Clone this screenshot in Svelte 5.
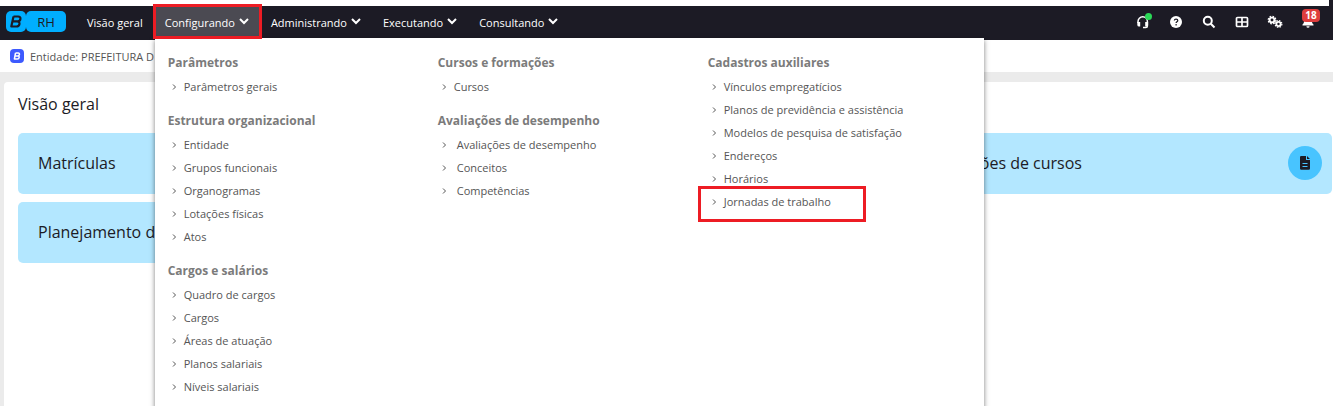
<script lang="ts">
	const columns = [
		[
			{ title: 'Parâmetros', links: ['Parâmetros gerais'] },
			{
				title: 'Estrutura organizacional',
				links: ['Entidade', 'Grupos funcionais', 'Organogramas', 'Lotações físicas', 'Atos']
			},
			{
				title: 'Cargos e salários',
				links: ['Quadro de cargos', 'Cargos', 'Áreas de atuação', 'Planos salariais', 'Níveis salariais']
			}
		],
		[
			{ title: 'Cursos e formações', links: ['Cursos'] },
			{
				title: 'Avaliações de desempenho',
				wide: true,
				links: ['Avaliações de desempenho', 'Conceitos', 'Competências']
			}
		],
		[
			{
				title: 'Cadastros auxiliares',
				links: [
					'Vínculos empregatícios',
					'Planos de previdência e assistência',
					'Modelos de pesquisa de satisfação',
					'Endereços',
					'Horários',
					'Jornadas de trabalho'
				]
			}
		]
	];

	const menus = ['Configurando', 'Administrando', 'Executando', 'Consultando'];
	const highlighted = 'Jornadas de trabalho';

	let open = $state('Configurando');

	function toggle(name: string) {
		open = open === name ? '' : name;
	}
</script>

<div class="page">
	<header class="topbar">
		<a class="brand" href="#inicio" aria-label="RH">
			<span class="brand-mark">
				<svg width="14" height="13" viewBox="0 0 14 13" fill="none" stroke="#1c1b25" stroke-width="2.200" stroke-linejoin="round">
					<path d="M4.500 1.500h4.700c3.300 0 2.800 4.700-.4 4.900H3.500M8.400 6.400c3.400.2 2.500 5.100-1 5.100H2.300L4.500 1.500" />
				</svg>
			</span>
			<span class="brand-name">RH</span>
		</a>

		<nav class="nav">
			<a class="nav-link" href="#visao-geral">Visão geral</a>
			{#each menus as name}
				<div class="nav-item" class:open={open === name}>
					<button class="nav-link" aria-expanded={open === name} onclick={() => toggle(name)}>
						{name}
						<svg width="10" height="8" viewBox="0 0 10 8" fill="none">
							<path d="M1 1l4 4 4-4" stroke="currentColor" stroke-width="2" />
						</svg>
					</button>
					{#if name === 'Configurando' && open === name}
						<div class="menu">
							{#each columns as groups}
								<div class="menu-column">
									{#each groups as group}
										<section>
											<h3>{group.title}</h3>
											<ul class:wide={group.wide}>
												{#each group.links as link}
													<li>
														<a href="#menu" class:highlighted={link === highlighted}>
															<svg width="5" height="7" viewBox="0 0 5 7" fill="none">
																<path d="M1 1.500L3.500 4 1 6.500" stroke="currentColor" />
															</svg>
															{link}
														</a>
													</li>
												{/each}
											</ul>
										</section>
									{/each}
								</div>
							{/each}
						</div>
					{/if}
				</div>
			{/each}
		</nav>

		<div class="tools">
			<button aria-label="Suporte">
				<svg width="14" height="14" viewBox="0 0 14 14" fill="none">
					<path d="M2 8V6.500a4.700 4.700 0 0 1 9.400 0V11c0 1-.6 1.500-1.600 1.500H7" stroke="#fff" stroke-width="1.500" />
					<path d="M1.300 7h2.900v4.500H3A1.700 1.700 0 0 1 1.300 10zM9.200 7h2.900v3a1.700 1.700 0 0 1-1.700 1.500H9.200z" fill="#fff" />
				</svg>
				<span class="status"></span>
			</button>
			<button aria-label="Ajuda">
				<svg width="14" height="14" viewBox="0 0 14 14" fill="none">
					<circle cx="7" cy="7" r="6" fill="#fff" />
					<path d="M5.300 5.500c.2-2 3.500-1.800 3.500.1 0 1.200-1.700 1.200-1.700 2.400M7.100 9v1.400" stroke="#1c1b25" stroke-width="1.200" />
				</svg>
			</button>
			<button aria-label="Pesquisar">
				<svg width="14" height="14" viewBox="0 0 14 14" fill="none" stroke="#fff" stroke-width="2">
					<circle cx="5.800" cy="5.800" r="4" />
					<path d="M8.800 8.800l3.700 3.700" />
				</svg>
			</button>
			<button aria-label="Aplicativos">
				<svg width="14" height="14" viewBox="0 0 14 14" fill="none" stroke="#fff" stroke-width="1.700">
					<rect x="1.500" y="2.500" width="11" height="9" rx="1" />
					<path d="M7 3v8M2 7h10" />
				</svg>
			</button>
			<button aria-label="Configurações">
				<svg width="16" height="14" viewBox="0 0 16 14" fill="none" stroke="#fff">
					<circle cx="5" cy="5" r="2.400" stroke-width="1.900" />
					<circle cx="5" cy="5" r="3.800" stroke-width="1.200" stroke-dasharray="1.700 1.280" />
					<circle cx="11.500" cy="9" r="2.100" stroke-width="1.800" />
					<circle cx="11.500" cy="9" r="3.400" stroke-width="1.200" stroke-dasharray="1.500 1.170" />
				</svg>
			</button>
			<button aria-label="Notificações">
				<svg width="14" height="14" viewBox="0 0 14 14" fill="#fff">
					<path d="M7 1c3 0 3.800 2 3.800 4 0 2.500.5 3.500 1.700 4.500v1h-11v-1C2.700 8.500 3.200 7.500 3.200 5c0-2 .8-4 3.800-4zM5.400 11.200h3.200a1.600 1.600 0 0 1-3.200 0z" />
				</svg>
				<span class="count">18</span>
			</button>
		</div>
	</header>

	<div class="entity">
		<svg width="14" height="14" viewBox="0 0 14 14" fill="none">
			<rect width="14" height="14" rx="4" fill="#3d5afe" />
			<path d="M5.500 4h2.700c1.900 0 1.600 2.900-.3 2.900H5M7.900 6.900c2 0 1.600 3.100-.5 3.100H4.400l1.100-6" stroke="#fff" stroke-width="1.500" stroke-linejoin="round" />
		</svg>
		<span>Entidade: PREFEITURA D</span>
	</div>

	<main>
		<h1>Visão geral</h1>
		<div class="cards">
			<a class="card" href="#matriculas">Matrículas</a>
			<a class="card last" href="#cursos">
				Solicitações de cursos
				<span class="card-icon">
					<svg width="10" height="14" viewBox="0 0 10 14">
						<path d="M1.500 0H6v4h4v8.500a1.300 1.300 0 0 1-1.300 1.300H1.300A1.300 1.300 0 0 1 0 12.500v-11A1.400 1.400 0 0 1 1.500 0zM7 0l3 3H7z" fill="#1c1b25" />
						<path d="M2.500 7.500h5M2.500 10.500h5" stroke="#48c4ff" stroke-width="1.200" />
					</svg>
				</span>
			</a>
			<a class="card" href="#planejamento">Planejamento de</a>
		</div>
	</main>
</div>

<style>
	:global(body) {
		margin: 0;
		background: #fff;
	}

	.page {
		display: flex;
		flex-direction: column;
		height: 100vh;
		overflow: hidden;
		background: #ebebeb;
		font-family: 'Open Sans', 'Noto Sans', sans-serif;
		color: #1c1b25;
	}

	.page::before {
		content: '';
		flex-shrink: 0;
		height: 6px;
		border-right: 4px solid #1c1b25;
		background: #fff;
	}

	a {
		color: inherit;
		text-decoration: none;
	}

	button {
		padding: 0;
		border: 0;
		background: none;
		font: inherit;
		color: inherit;
		cursor: pointer;
	}

	.topbar {
		display: flex;
		flex-shrink: 0;
		align-items: flex-start;
		height: 34px;
		padding: 0 17px 0 6px;
		background: #1c1b25;
		color: #fff;
	}

	.brand {
		display: flex;
		margin-top: 5px;
		color: #1c1b25;
	}

	.brand-mark,
	.brand-name {
		display: flex;
		align-items: center;
		justify-content: center;
		height: 21px;
		border-radius: 5px;
		background: #00aeff;
	}

	.brand-mark {
		width: 20px;
	}

	.brand-name {
		width: 40px;
		font-size: 13px;
		font-weight: 500;
	}

	.nav {
		display: flex;
		margin-left: 10px;
		font-size: 11px;
		font-weight: 500;
	}

	.nav-link {
		display: flex;
		align-items: center;
		gap: 4px;
		height: 32px;
		padding: 0 11px;
		white-space: nowrap;
	}

	.nav-item {
		position: relative;
	}

	.nav-item.open .nav-link {
		background: #4b4a52;
	}

	/* red frame drawn over the open item */
	.nav-item.open::after {
		content: '';
		position: absolute;
		z-index: 3;
		inset: -2px -2px -1px -1px;
		border: 3px solid #ed1c24;
		pointer-events: none;
	}

	.menu {
		position: absolute;
		z-index: 2;
		top: 32px;
		left: 1px;
		display: grid;
		grid-template-columns: repeat(3, 1fr);
		box-sizing: border-box;
		width: 829px;
		max-width: calc(100vw - 155px);
		padding: 13px 6px 24px 13px;
		background: #fff;
		box-shadow: 0 2px 5px rgba(0, 0, 0, 0.5);
	}

	section {
		margin-bottom: 11px;
	}

	h3 {
		margin: 0;
		font-size: 12px;
		font-weight: 700;
		line-height: 24px;
		color: #7b7b7b;
	}

	ul {
		margin: 0;
		padding: 0;
		list-style: none;
	}

	li a {
		position: relative;
		display: inline-flex;
		align-items: center;
		gap: 7px;
		padding-left: 4px;
		font-size: 11px;
		font-weight: 400;
		line-height: 23px;
		color: #555;
		vertical-align: top;
	}

	.wide a {
		gap: 10px;
	}

	li a.highlighted::after {
		content: '';
		position: absolute;
		inset: -4px -35px -9px -10px;
		border: 3px solid #ed1c24;
		pointer-events: none;
	}

	.tools {
		display: flex;
		gap: 17px;
		margin-left: auto;
	}

	.tools button {
		position: relative;
		display: flex;
		align-items: center;
		justify-content: center;
		width: 16px;
		height: 32px;
	}

	.status {
		position: absolute;
		top: 7px;
		right: -1px;
		width: 7px;
		height: 7px;
		border-radius: 50%;
		background: #2bd957;
	}

	.count {
		position: absolute;
		top: 3px;
		right: -4px;
		width: 18px;
		border-radius: 4px;
		background: #df3d3d;
		font-size: 10px;
		font-weight: 700;
		line-height: 13px;
		text-align: center;
	}

	.entity {
		display: flex;
		flex-shrink: 0;
		align-items: center;
		gap: 6px;
		height: 32px;
		padding-left: 10px;
		background: #fff;
		font-size: 11px;
		color: #555;
	}

	main {
		flex: 1;
		margin: 10px 0 0 4px;
		padding: 10px 1px 0 14px;
		border-radius: 4px 0 0 0;
		background: #fff;
	}

	h1 {
		margin: 0 0 17px;
		font-size: 16px;
		font-weight: 400;
		line-height: 24px;
	}

	.cards {
		display: grid;
		grid-template-columns: repeat(3, 1fr);
		gap: 8px;
	}

	.card {
		display: flex;
		align-items: center;
		justify-content: space-between;
		height: 61px;
		box-sizing: border-box;
		padding: 0 10px 1px 20px;
		border-radius: 5px;
		background: #b3e7ff;
		font-size: 16px;
	}

	.card.last {
		grid-column: 3;
	}

	.card-icon {
		display: flex;
		align-items: center;
		justify-content: center;
		width: 34px;
		height: 34px;
		border-radius: 50%;
		background: #48c4ff;
	}
</style>
